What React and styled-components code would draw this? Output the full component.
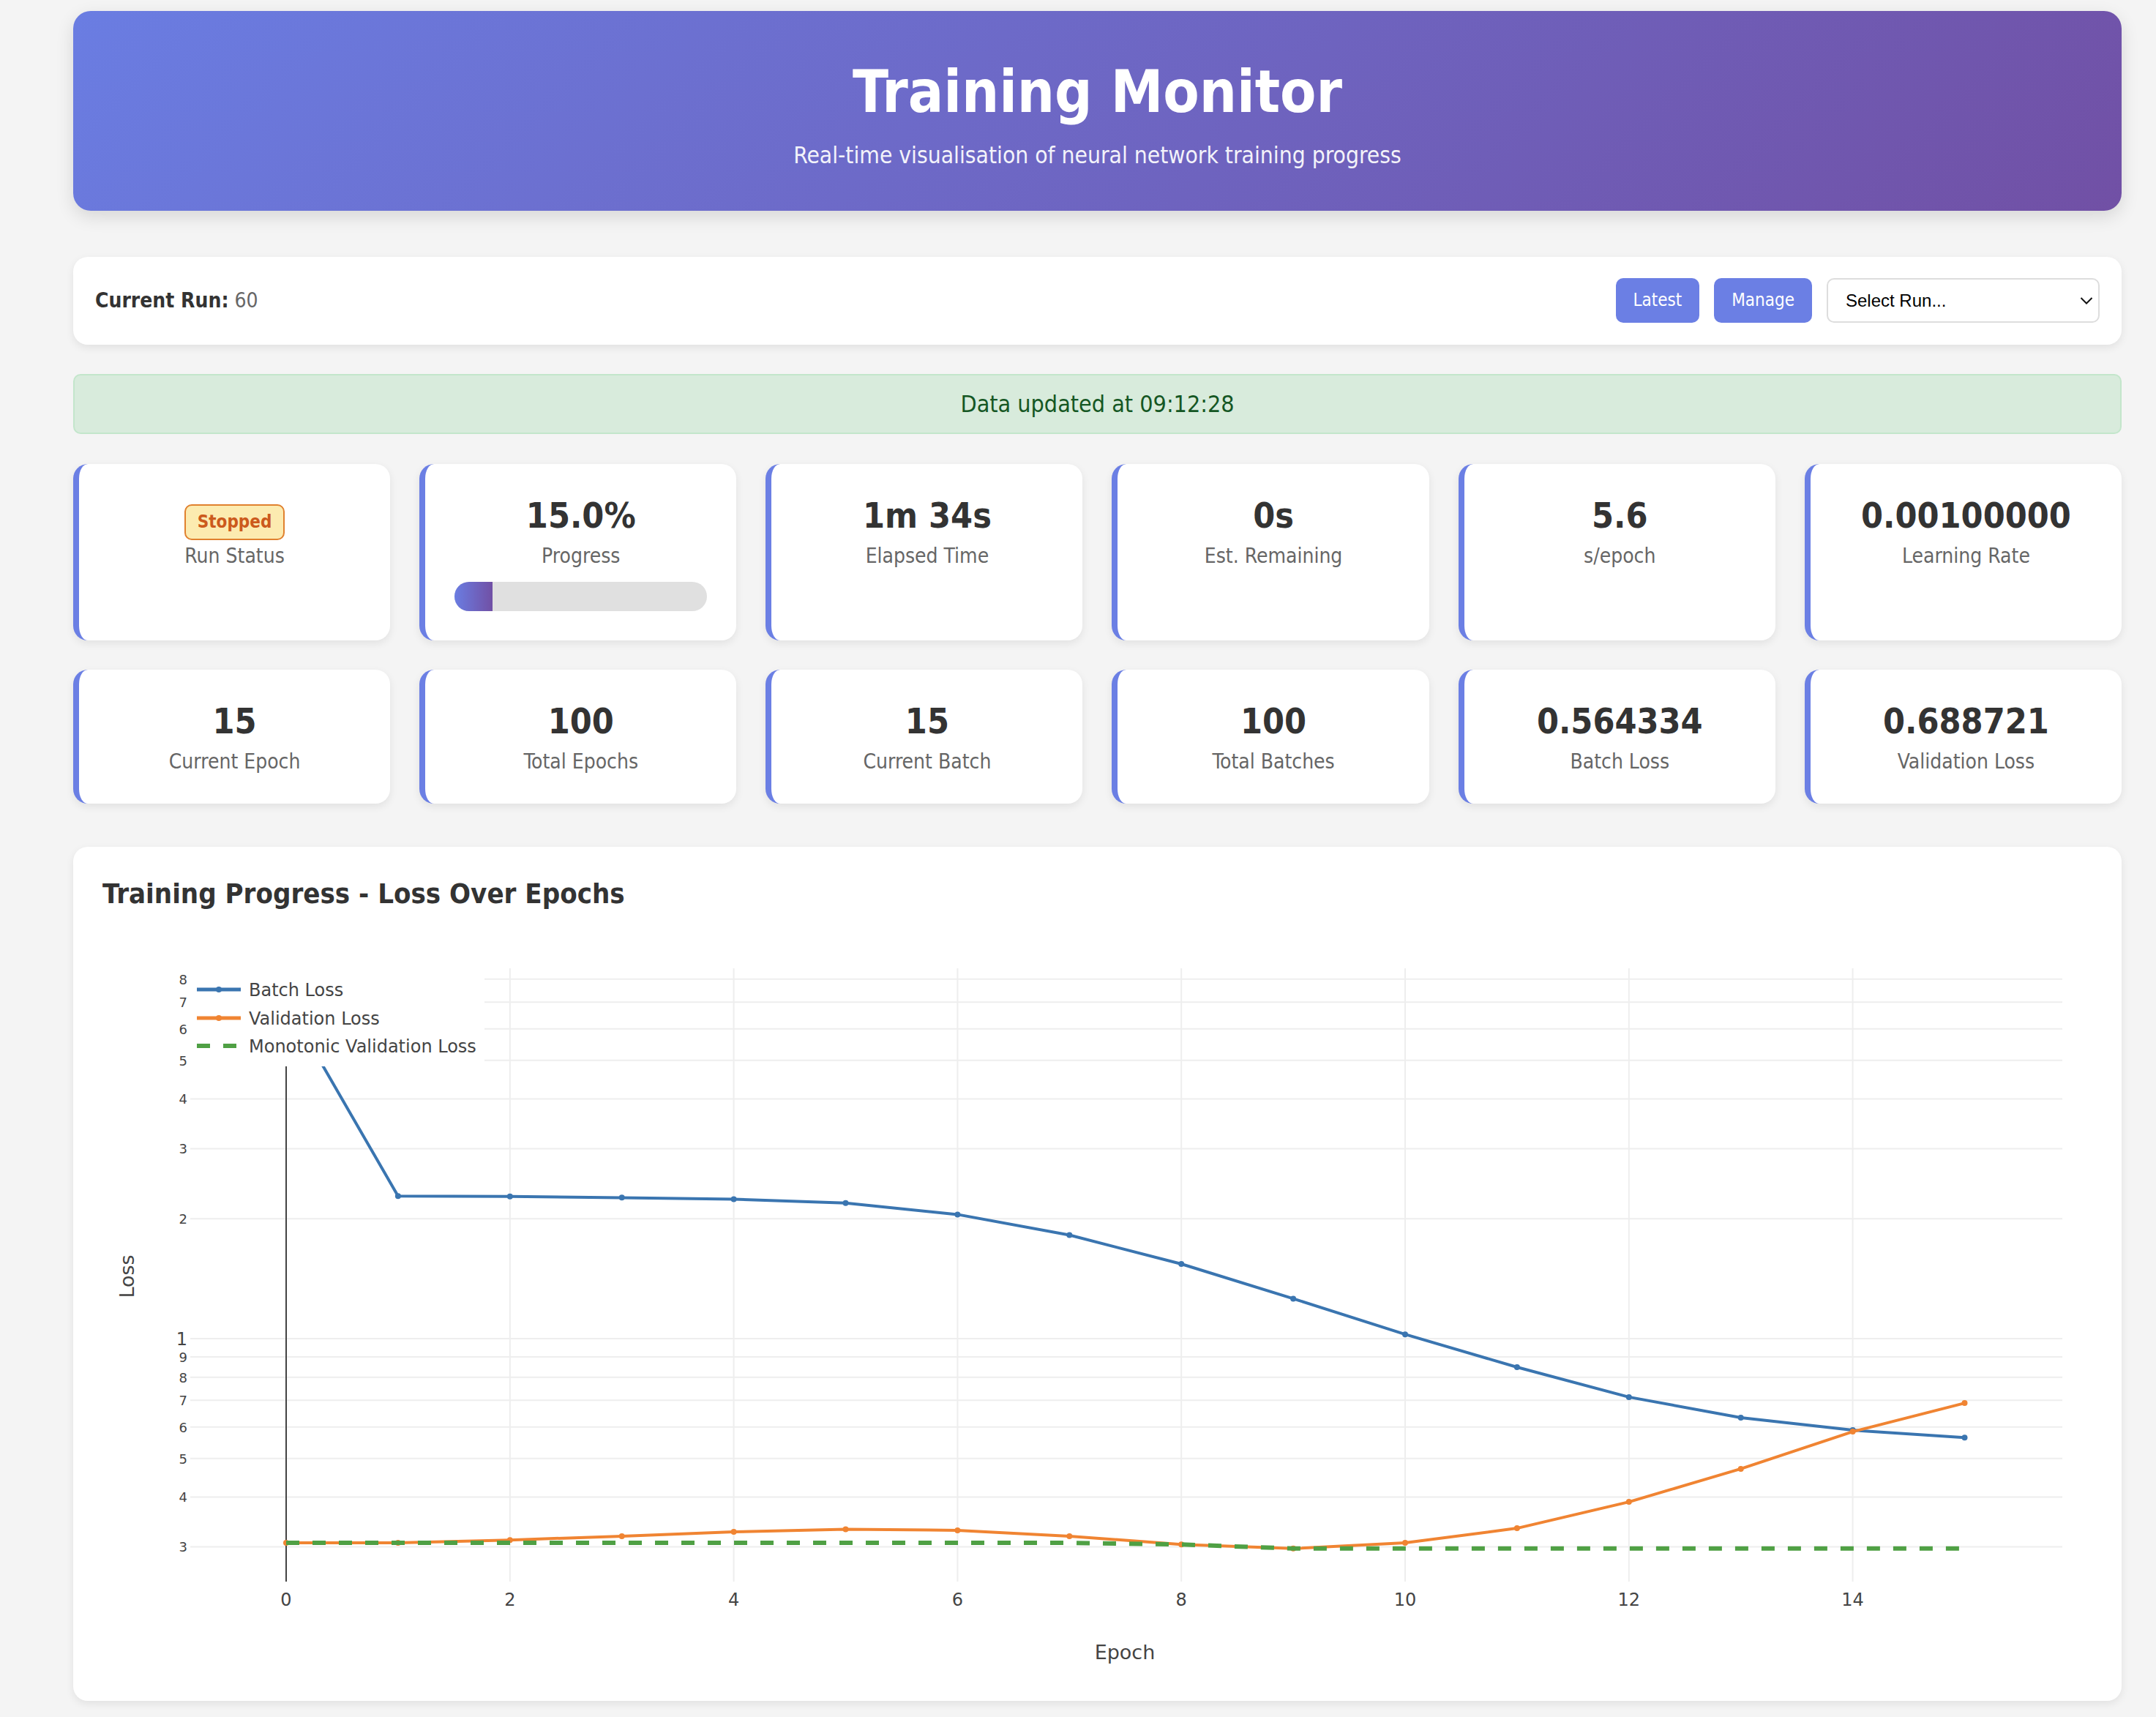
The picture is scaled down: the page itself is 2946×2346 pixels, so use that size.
import React from "react";
import styled, { createGlobalStyle } from "styled-components";

const GlobalStyle = createGlobalStyle`
  html, body { margin: 0; padding: 0; background: #f4f4f4; }
  body {
    font-family: "DejaVu Sans Condensed", "DejaVu Sans", sans-serif;
    font-stretch: condensed;
    color: #333;
  }
  * { box-sizing: border-box; }
`;

const Page = styled.div`
  display: flex;
  flex-direction: column;
  padding: 15px 47px 22px 100px;
`;

const Header = styled.header`
  background: linear-gradient(135deg, #6a7de2 0%, #7150a5 100%);
  border-radius: 24px;
  padding: 64px 40px 57px;
  text-align: center;
  color: #fff;
  box-shadow: 0 8px 24px rgba(0, 0, 0, 0.12);
  margin-bottom: 63px;
`;

const Title = styled.h1`
  margin: 0 0 22px;
  font-size: 80px;
  font-weight: bold;
  line-height: 93px;
`;

const Subtitle = styled.p`
  margin: 0;
  font-size: 31.5px;
  line-height: 37px;
  opacity: 0.92;
`;

const RunBar = styled.section`
  display: flex;
  align-items: center;
  justify-content: space-between;
  background: #fff;
  border-radius: 20px;
  padding: 29px 30px 30px;
  box-shadow: 0 4px 12px rgba(0, 0, 0, 0.08);
  margin-bottom: 40px;
`;

const RunInfo = styled.div`
  font-size: 28px;
  color: #666;
  strong { color: #333; font-weight: bold; }
`;

const Controls = styled.div`
  display: flex;
  align-items: center;
  gap: 20px;
`;

const Button = styled.button`
  font-family: inherit;
  font-stretch: condensed;
  font-size: 24px;
  line-height: 29px;
  padding: 16px 24px;
  border: none;
  border-radius: 10px;
  background: #6b7fe4;
  color: #fff;
  cursor: pointer;
`;

const SelectWrap = styled.div`
  position: relative;
  width: 373px;
  height: 61px;
`;

const Select = styled.select`
  appearance: none;
  -webkit-appearance: none;
  width: 100%;
  height: 100%;
  border: 2px solid #ddd;
  border-radius: 10px;
  background: #fff;
  padding: 0 40px 0 24px;
  font-family: "Liberation Sans", Arial, sans-serif;
  font-stretch: normal;
  font-size: 24px;
  color: #000;
`;

const Chevron = styled.svg`
  position: absolute;
  right: 9px;
  top: 50%;
  transform: translateY(-50%);
  pointer-events: none;
`;

const Banner = styled.div`
  background: #d8ebdc;
  border: 2px solid #c3e6cb;
  border-radius: 10px;
  color: #155724;
  text-align: center;
  font-size: 32px;
  line-height: 38px;
  padding: 20px;
  margin-bottom: 41px;
`;

const StatsGrid = styled.div`
  display: grid;
  grid-template-columns: repeat(6, 1fr);
  gap: 40px;
  margin-bottom: 59px;
`;

const StatCard = styled.div`
  background: #fff;
  border-radius: 20px;
  border-left: 8px solid #6b7fe4;
  padding: 40px;
  text-align: center;
  box-shadow: 0 4px 12px rgba(0, 0, 0, 0.08);
`;

const StatValue = styled.div`
  font-size: 48px;
  line-height: 60px;
  font-weight: bold;
  color: #333;
  margin-bottom: 9px;
`;

const StatLabel = styled.div`
  font-size: 28px;
  line-height: 34px;
  color: #666;
`;

const Badge = styled.span`
  display: inline-block;
  vertical-align: middle;
  font-size: 24px;
  line-height: 29px;
  font-weight: bold;
  padding: 8px 16px;
  border: 2px solid #e0812f;
  border-radius: 10px;
  background: #fcebb0;
  color: #cc5a1c;
  position: relative;
  top: 5px;
`;

const ProgressTrack = styled.div`
  margin-top: 18px;
  height: 40px;
  border-radius: 20px;
  background: #e0e0e0;
  overflow: hidden;
`;

const ProgressFill = styled.div`
  height: 100%;
  background: linear-gradient(90deg, #6a7de2, #7150a5);
`;

const ChartCard = styled.section`
  background: #fff;
  border-radius: 20px;
  padding: 40px;
  box-shadow: 0 4px 12px rgba(0, 0, 0, 0.08);
`;

const ChartTitle = styled.h2`
  margin: 0;
  font-size: 38px;
  line-height: 48px;
  font-weight: bold;
  color: #333;
`;

const PlotSvg = styled.svg`
  display: block;
  font-family: "DejaVu Sans", Verdana, sans-serif;
  font-stretch: normal;
`;

/* ---------- chart data ---------- */
const BLUE = "#3a75b0";
const ORANGE = "#f08432";
const GREEN = "#4fa044";

const batch = [7.0, 2.28, 2.276, 2.26, 2.24, 2.19, 2.05, 1.82, 1.54, 1.26, 1.025, 0.848, 0.713, 0.633, 0.589, 0.5643];
const val = [0.307, 0.307, 0.312, 0.319, 0.327, 0.332, 0.33, 0.319, 0.304, 0.297, 0.307, 0.334, 0.389, 0.471, 0.584, 0.6887];
const mono = val.reduce((acc, v, i) => { acc.push(i === 0 ? v : Math.min(acc[i - 1], v)); return acc; }, []);

const W = 2719;
const H = 1039;
const PL = 120, PR = 2678, PT = 78, PB = 916;
const X = (e) => 251 + 152.9 * e;
const Y = (v) => 584 - 544 * Math.log10(v);

const yTicks = [0.3, 0.4, 0.5, 0.6, 0.7, 0.8, 0.9, 1, 2, 3, 4, 5, 6, 7, 8];
const xTicks = [0, 2, 4, 6, 8, 10, 12, 14];

const pts = (arr) => arr.map((v, i) => `${X(i).toFixed(1)},${Y(v).toFixed(1)}`).join(" ");

function LossChart() {
  return (
    <PlotSvg width={W} height={H} viewBox={`0 0 ${W} ${H}`}>
      <defs>
        <clipPath id="plotclip">
          <rect x={PL} y={PT} width={PR - PL} height={PB - PT} />
        </clipPath>
      </defs>
      {xTicks.filter((t) => t !== 0).map((t) => (
        <line key={"vx" + t} x1={X(t)} x2={X(t)} y1={PT} y2={PB} stroke="#eee" strokeWidth="2" />
      ))}
      {yTicks.map((t) => (
        <line key={"hy" + t} x1={PL} x2={PR} y1={Y(t)} y2={Y(t)} stroke="#eee" strokeWidth="2" />
      ))}
      <line x1={X(0)} x2={X(0)} y1={PT} y2={PB} stroke="#444" strokeWidth="2" />
      <g clipPath="url(#plotclip)">
        <polyline points={pts(batch)} fill="none" stroke={BLUE} strokeWidth="4" strokeLinejoin="round" />
        {batch.map((v, i) => <circle key={"b" + i} cx={X(i)} cy={Y(v)} r="4" fill={BLUE} />)}
        <polyline points={pts(val)} fill="none" stroke={ORANGE} strokeWidth="4" strokeLinejoin="round" />
        {val.map((v, i) => <circle key={"v" + i} cx={X(i)} cy={Y(v)} r="4" fill={ORANGE} />)}
        <polyline points={pts(mono)} fill="none" stroke={GREEN} strokeWidth="6" strokeDasharray="18,18" />
      </g>
      {yTicks.map((t) => {
        const big = t === 1;
        const label = t < 1 ? String(Math.round(t * 10)) : String(t);
        return (
          <text key={"yl" + t} x={116} y={Y(t) + (big ? 9 : 7)} textAnchor="end" fontSize={big ? 24 : 18} fill="#444">
            {label}
          </text>
        );
      })}
      {xTicks.map((t) => (
        <text key={"xl" + t} x={X(t)} y={949} textAnchor="middle" fontSize="24" fill="#444">{t}</text>
      ))}
      <text x={1397} y={1022} textAnchor="middle" fontSize="27" fill="#444">Epoch</text>
      <text transform="translate(43 499) rotate(-90)" textAnchor="middle" fontSize="27" fill="#444">Loss</text>
      <g>
        <rect x={118} y={78} width={404} height={134} fill="#fff" />
        <line x1={129} x2={189} y1={107} y2={107} stroke={BLUE} strokeWidth="5" />
        <circle cx={159} cy={107} r="4" fill={BLUE} />
        <text x={200} y={116} fontSize="24" fill="#444">Batch Loss</text>
        <line x1={129} x2={189} y1={146} y2={146} stroke={ORANGE} strokeWidth="5" />
        <circle cx={159} cy={146} r="4" fill={ORANGE} />
        <text x={200} y={155} fontSize="24" fill="#444">Validation Loss</text>
        <line x1={129} x2={189} y1={184} y2={184} stroke={GREEN} strokeWidth="6" strokeDasharray="18,18" />
        <text x={200} y={193} fontSize="24" fill="#444">Monotonic Validation Loss</text>
      </g>
    </PlotSvg>
  );
}

const stats = [
  { value: "15", label: "Current Epoch" },
  { value: "100", label: "Total Epochs" },
  { value: "15", label: "Current Batch" },
  { value: "100", label: "Total Batches" },
  { value: "0.564334", label: "Batch Loss" },
  { value: "0.688721", label: "Validation Loss" },
];

export default function App() {
  return (
    <>
      <GlobalStyle />
      <Page>
        <Header>
          <Title>Training Monitor</Title>
          <Subtitle>Real-time visualisation of neural network training progress</Subtitle>
        </Header>

        <RunBar>
          <RunInfo><strong>Current Run:</strong> 60</RunInfo>
          <Controls>
            <Button>Latest</Button>
            <Button>Manage</Button>
            <SelectWrap>
              <Select defaultValue="">
                <option value="">Select Run...</option>
              </Select>
              <Chevron width="18" height="11" viewBox="0 0 18 11">
                <path d="M1.5 1.5 L9 9 L16.5 1.5" fill="none" stroke="#111" strokeWidth="2" />
              </Chevron>
            </SelectWrap>
          </Controls>
        </RunBar>

        <Banner>Data updated at 09:12:28</Banner>

        <StatsGrid>
          <StatCard>
            <StatValue><Badge>Stopped</Badge></StatValue>
            <StatLabel>Run Status</StatLabel>
          </StatCard>
          <StatCard>
            <StatValue>15.0%</StatValue>
            <StatLabel>Progress</StatLabel>
            <ProgressTrack>
              <ProgressFill style={{ width: "15%" }} />
            </ProgressTrack>
          </StatCard>
          <StatCard>
            <StatValue>1m 34s</StatValue>
            <StatLabel>Elapsed Time</StatLabel>
          </StatCard>
          <StatCard>
            <StatValue>0s</StatValue>
            <StatLabel>Est. Remaining</StatLabel>
          </StatCard>
          <StatCard>
            <StatValue>5.6</StatValue>
            <StatLabel>s/epoch</StatLabel>
          </StatCard>
          <StatCard>
            <StatValue>0.00100000</StatValue>
            <StatLabel>Learning Rate</StatLabel>
          </StatCard>
          {stats.map((s) => (
            <StatCard key={s.label}>
              <StatValue>{s.value}</StatValue>
              <StatLabel>{s.label}</StatLabel>
            </StatCard>
          ))}
        </StatsGrid>

        <ChartCard>
          <ChartTitle>Training Progress - Loss Over Epochs</ChartTitle>
          <LossChart />
        </ChartCard>
      </Page>
    </>
  );
}
